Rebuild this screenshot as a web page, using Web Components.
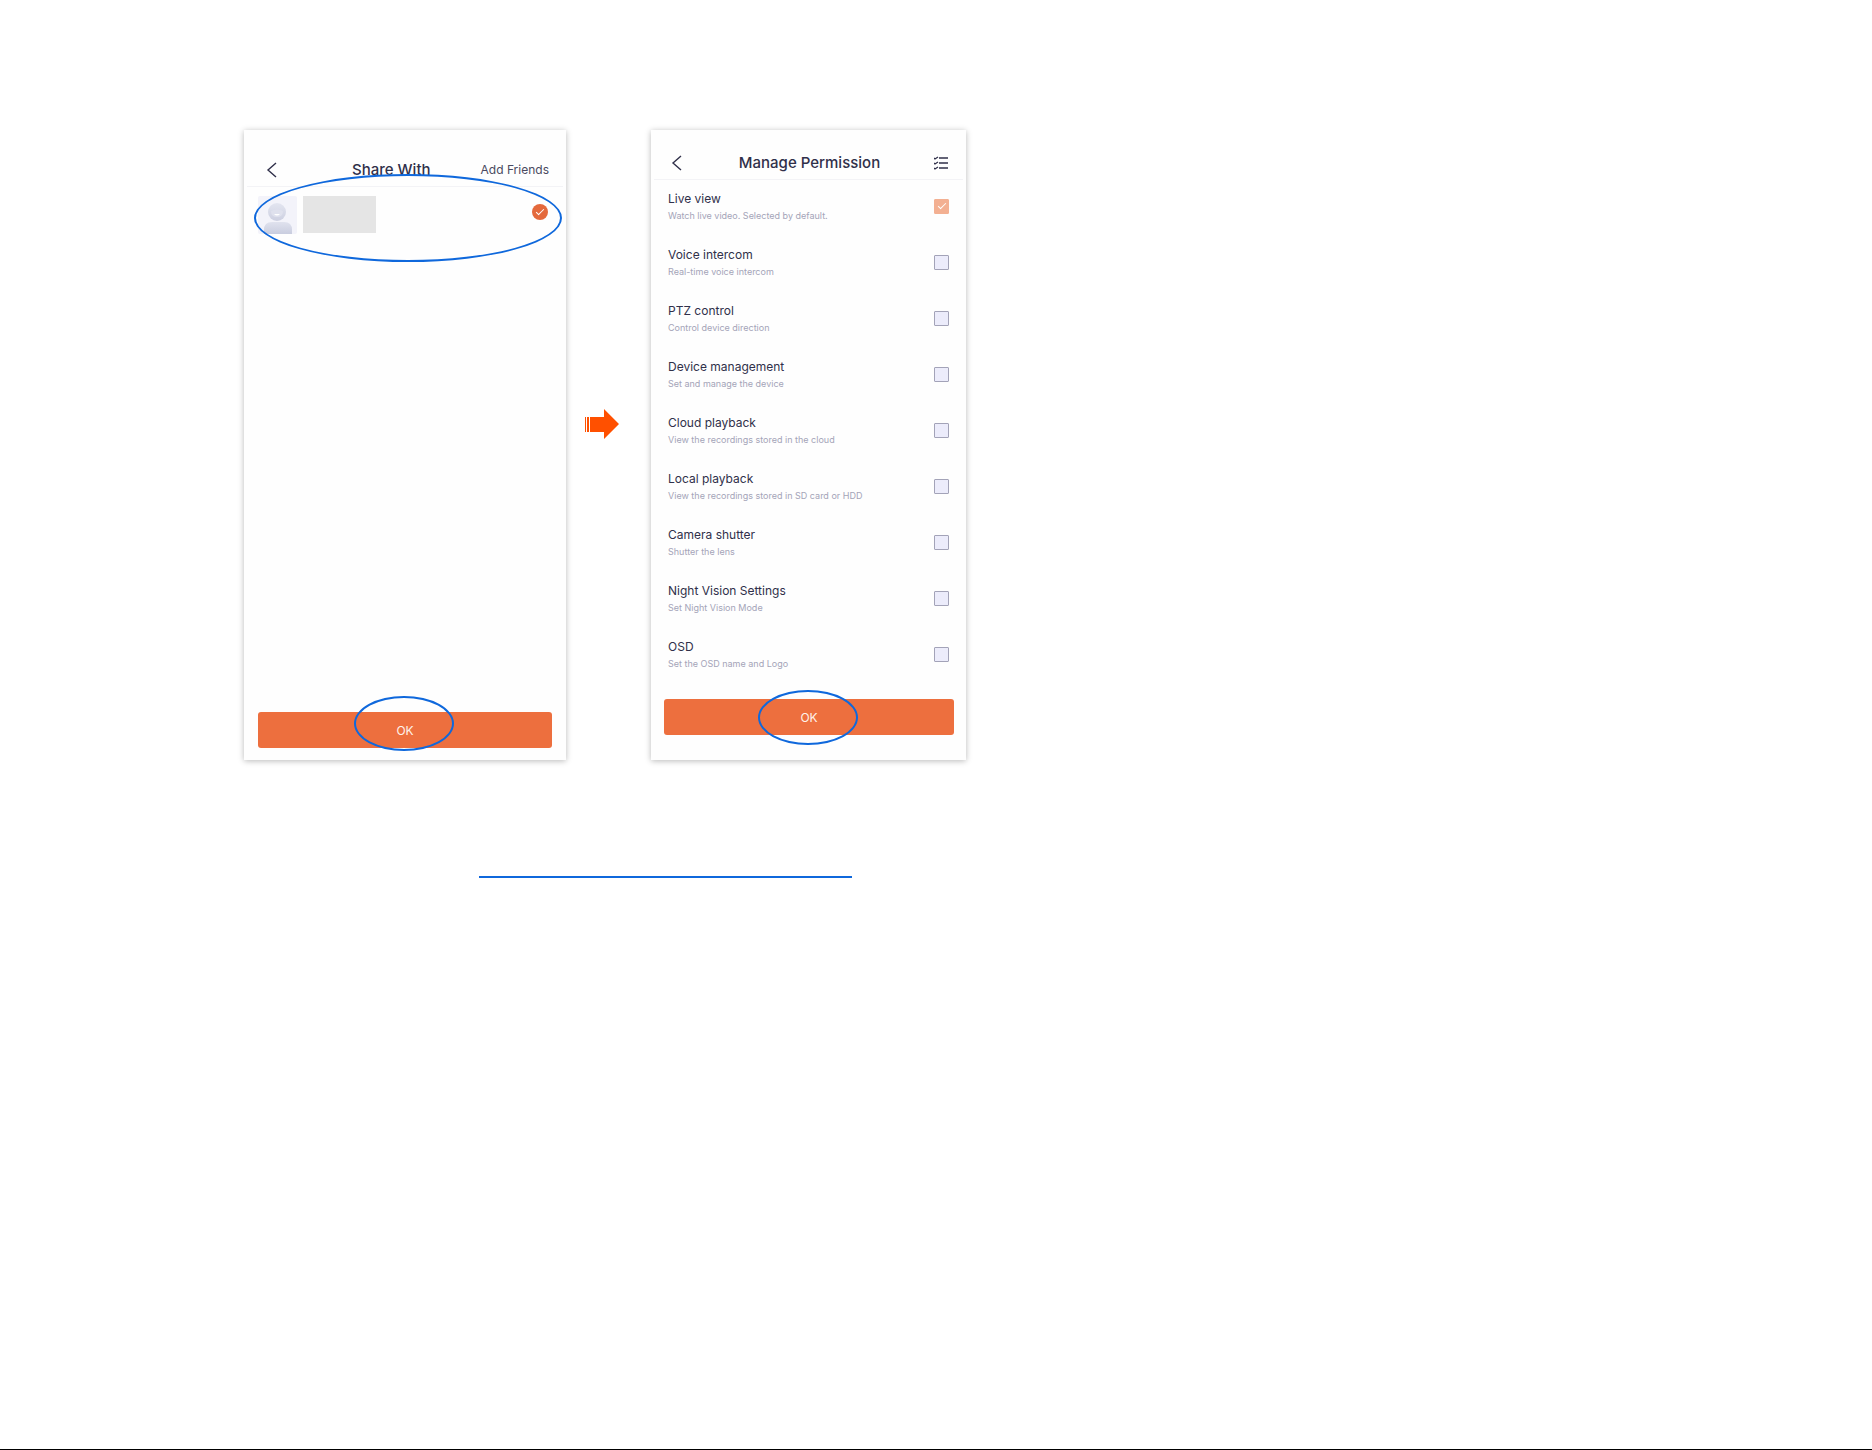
<!DOCTYPE html>
<html lang="en">
<head>
<meta charset="utf-8">
<meta name="viewport" content="width=device-width, initial-scale=1">
<title>Share device</title>
<style>
    body {
        margin: 0;
        background: #fff;
        font-family: Inter, "Liberation Sans", sans-serif;
        color: #30304a;
    }
</style>
</head>
<body>
<share-guide></share-guide>

<script>
class PhoneScreen extends HTMLElement {
    constructor() {
        super();
        this.attachShadow({ mode: 'open' })
    }
    connectedCallback() {
        this.render();
    }
    static get styles() {
        return /* CSS */ `
            :host{
                display: flex;
                flex-direction: column;
                background: #fefefe;
                box-shadow: 0 1px 6px rgba(0, 0, 0, .28);
            }
            header{
                display: grid;
                grid-template-columns: var(--bar-columns, 1fr auto 1fr);
                align-items: center;
                height: 33px;
                margin: 0 3px;
                padding: var(--bar-top, 16px) var(--bar-right, 15px) 0 var(--bar-left, 17px);
                border-bottom: 1px solid #f3f3f6;
            }
            .back{
                display: flex;
                justify-self: start;
                padding: 0;
                border: 0;
                background: none;
                color: inherit;
            }
            h2{
                margin: 0;
                font-size: 15px;
                line-height: 20px;
                font-weight: 500;
                text-align: right;
                white-space: nowrap;
            }
            .action{
                grid-column: -2 / -1;
                display: flex;
                justify-content: flex-end;
            }
            main{
                flex: 1;
            }
        `
    }
    render() {
        this.shadowRoot.innerHTML = /*html*/ `
            <style>${PhoneScreen.styles}</style>
            <header>
                <button class="back" aria-label="Back">
                    <svg width="12" height="16" viewBox="0 0 12 16" fill="none" stroke="currentColor" stroke-width="1.4"><path d="M10 1 2 8l8 7"/></svg>
                </button>
                <h2><slot name="title"></slot></h2>
                <div class="action"><slot name="action"></slot></div>
            </header>
            <main><slot></slot></main>
            <slot name="footer"></slot>
        `;
    }
}
customElements.define('phone-screen', PhoneScreen);

class MarkRing extends HTMLElement {
    constructor() {
        super();
        this.attachShadow({ mode: 'open' })
    }
    connectedCallback() {
        this.shadowRoot.innerHTML = /*html*/ `
            <style>
                :host{
                    position: absolute;
                    box-sizing: border-box;
                    border: 2px solid #0f68dc;
                    border-radius: 50%;
                    pointer-events: none;
                }
            </style>
        `;
    }
}
customElements.define('mark-ring', MarkRing);

class OkButton extends HTMLElement {
    constructor() {
        super();
        this.attachShadow({ mode: 'open' })
    }
    connectedCallback() {
        this.render();
    }
    static get styles() {
        return /* CSS */ `
            :host{
                display: grid;
                position: relative;
            }
            button{
                height: 36px;
                padding: 0;
                border: 0;
                border-radius: 3px;
                background: #ed6f3e;
                color: #fff3ec;
                font: inherit;
                font-size: 12px;
            }
            mark-ring{
                width: 100px;
                height: 55px;
                left: calc(50% - 51px);
                top: var(--ring-top, -9px);
            }
        `
    }
    render() {
        this.shadowRoot.innerHTML = /*html*/ `
            <style>${OkButton.styles}</style>
            <button><slot></slot></button>
            <mark-ring></mark-ring>
        `;
    }
}
customElements.define('ok-button', OkButton);

class FriendRow extends HTMLElement {
    constructor() {
        super();
        this.attachShadow({ mode: 'open' })
    }
    connectedCallback() {
        this.render();
    }
    static get styles() {
        return /* CSS */ `
            :host{
                display: flex;
                position: relative;
                align-items: flex-start;
                padding: 9px 18px 0 14px;
            }
            .name{
                width: 73px;
                height: 37px;
                margin-left: 6px;
                background: #e5e5e5;
            }
            input{
                appearance: none;
                width: 16px;
                height: 16px;
                margin: 8px 0 0 auto;
                border-radius: 50%;
                background: #e4693c;
                display: grid;
                place-items: center;
            }
            input::before{
                content: "";
                width: 7px;
                height: 3px;
                margin-bottom: 3px;
                border: solid #fff;
                border-width: 0 0 1px 1px;
                transform: rotate(-45deg);
            }
            mark-ring{
                top: -13px;
                left: 10px;
                right: 4px;
                height: 88px;
            }
        `
    }
    render() {
        this.shadowRoot.innerHTML = /*html*/ `
            <style>${FriendRow.styles}</style>
            <svg width="39" height="38" viewBox="0 0 39 38" aria-hidden="true">
                <defs>
                    <linearGradient id="body" x2="0" y2="1"><stop stop-color="#e0e2ee"/><stop offset="1" stop-color="#c9cddf"/></linearGradient>
                    <linearGradient id="head" x2="0" y2="1"><stop stop-color="#e3e5f0"/><stop offset="1" stop-color="#cdd0e1"/></linearGradient>
                </defs>
                <rect width="39" height="38" rx="2" fill="#f3f3fa"/>
                <path d="M6 38v-4q0-8 8-8h12q8 0 8 8v4z" fill="url(#body)"/>
                <circle cx="19" cy="16" r="9" fill="url(#head)"/>
                <path d="M13 15q6-3 12 0 0 6-6 6t-6-6z" fill="#dfe1ed"/>
                <path d="M16 18q3 3 6 0z" fill="#fff"/>
            </svg>
            <div class="name"></div>
            <input type="checkbox" checked aria-label="Select friend">
            <mark-ring></mark-ring>
        `;
    }
}
customElements.define('friend-row', FriendRow);

class PermissionRow extends HTMLElement {
    constructor() {
        super();
        this.attachShadow({ mode: 'open' })
    }
    connectedCallback() {
        this.render();
    }
    static get styles() {
        return /* CSS */ `
            :host{
                display: block;
            }
            label{
                display: flex;
                align-items: center;
                justify-content: space-between;
            }
            .text{
                display: flex;
                flex-direction: column;
                white-space: nowrap;
            }
            .name{
                font-size: 12px;
                line-height: 16px;
            }
            .note{
                padding-top: 3px;
                font-size: 9px;
                line-height: 12px;
                color: #a4a4b8;
            }
            input{
                appearance: none;
                box-sizing: border-box;
                width: 15px;
                height: 15px;
                margin: 0;
                border: 1px solid #a3a3b8;
                border-radius: 1px;
                background: #ececfb;
                display: grid;
                place-items: center;
            }
            input:checked{
                border-color: #f3b092;
                background: #f3b092;
            }
            input:checked::before{
                content: "";
                width: 7px;
                height: 3px;
                margin-bottom: 3px;
                border: solid #fff;
                border-width: 0 0 1px 1px;
                transform: rotate(-45deg);
            }
        `
    }
    render() {
        this.shadowRoot.innerHTML = /*html*/ `
            <style>${PermissionRow.styles}</style>
            <label>
                <span class="text">
                    <span class="name"><slot name="name"></slot></span>
                    <span class="note"><slot></slot></span>
                </span>
                <input type="checkbox" ${this.hasAttribute('checked') ? 'checked' : ''}>
            </label>
        `;
    }
}
customElements.define('permission-row', PermissionRow);

const permissions = [
    ['Live view', 'Watch live video. Selected by default.'],
    ['Voice intercom', 'Real-time voice intercom'],
    ['PTZ control', 'Control device direction'],
    ['Device management', 'Set and manage the device'],
    ['Cloud playback', 'View the recordings stored in the cloud'],
    ['Local playback', 'View the recordings stored in SD card or HDD'],
    ['Camera shutter', 'Shutter the lens'],
    ['Night Vision Settings', 'Set Night Vision Mode'],
    ['OSD', 'Set the OSD name and Logo'],
];

class ShareGuide extends HTMLElement {
    constructor() {
        super();
        this.attachShadow({ mode: 'open' })
    }
    connectedCallback() {
        this.render();
    }
    static get styles() {
        return /* CSS */ `
            :host{
                display: block;
                box-sizing: border-box;
                min-height: 100vh;
                padding-top: 130px;
                border-bottom: 1px solid #000;
            }
            .steps{
                display: grid;
                grid-template-columns: 244fr 322fr 85fr 315fr 906fr;
            }
            .share{
                grid-column: 2;
                --bar-top: 23px;
                --bar-left: 19px;
                --bar-right: 14px;
                --bar-columns: auto 1fr 50px auto;
            }
            .share a{
                font-size: 12px;
                color: #4a4a60;
                text-decoration: none;
                white-space: nowrap;
            }
            .share ok-button{
                margin: 0 14px 12px 14px;
                --ring-top: -16px;
            }
            .arrow{
                align-self: center;
                margin: 0 0 42px 19px;
            }
            .list{
                display: grid;
                gap: 25px;
                padding: 11px 17px 29px;
            }
            .manage ok-button{
                margin: 0 12px 25px 13px;
            }
            .more{
                border: 0;
                padding: 0;
                background: none;
                color: inherit;
                display: flex;
            }
            .footnote{
                display: grid;
                grid-template-columns: 479fr 373fr 1020fr;
                padding-top: 96px;
            }
            .footnote a{
                grid-column: 2;
                height: 20px;
                border-bottom: 2px solid #0f68dc;
            }
        `
    }
    render() {
        this.shadowRoot.innerHTML = /*html*/ `
            <style>${ShareGuide.styles}</style>
            <section class="steps">
                <phone-screen class="share">
                    <span slot="title">Share With</span>
                    <a slot="action" href="#add">Add Friends</a>
                    <friend-row></friend-row>
                    <ok-button slot="footer">OK</ok-button>
                </phone-screen>
                <svg class="arrow" width="34" height="30" viewBox="0 0 34 30" fill="#ff5000" aria-hidden="true">
                    <path d="M0 8h1v15H0zM2 8h2v15H2zM5 8h14V0l15 15-15 15v-7H5z"/>
                </svg>
                <phone-screen class="manage">
                    <span slot="title">Manage Permission</span>
                    <button slot="action" class="more" aria-label="Select all">
                        <svg width="14" height="14" viewBox="0 0 14 14" fill="none" stroke="currentColor" stroke-width="1.3"><path d="M5 2h9M5 7h9M5 12h9M0 2l1 1 3-2M0 7l1 1 3-2M0 12l1 1 3-2"/></svg>
                    </button>
                    <div class="list">
                        ${permissions.map(([name, note], i) => `
                            <permission-row ${i === 0 ? 'checked' : ''}><span slot="name">${name}</span>${note}</permission-row>
                        `).join('')}
                    </div>
                    <ok-button slot="footer">OK</ok-button>
                </phone-screen>
            </section>
            <section class="footnote"><a href="#more" aria-label="More information"></a></section>
        `;
    }
}
customElements.define('share-guide', ShareGuide);
</script>
</body>
</html>
